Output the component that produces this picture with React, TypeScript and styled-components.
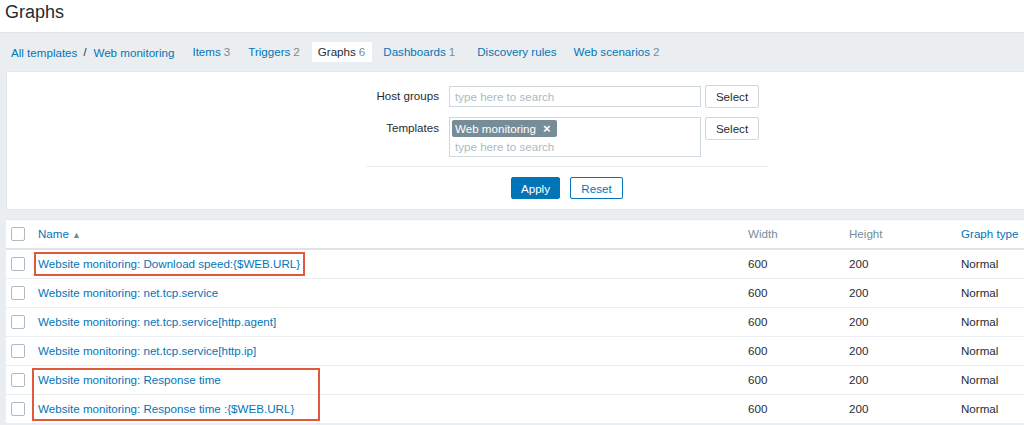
import styled, { createGlobalStyle } from "styled-components";

const GlobalStyle = createGlobalStyle`
  html, body {
    margin: 0;
    padding: 0;
    background: #ebeef0;
    font-family: "Liberation Sans", Arial, sans-serif;
    font-size: 11.6px;
    color: #1f2c33;
    overflow: hidden;
  }
`;

const Page = styled.div`
  width: 1024px;
  height: 425px;
  overflow: hidden;
`;

const Header = styled.div`
  height: 32px;
  background: #ffffff;
  border-bottom: 1px solid #dfe4e7;
  padding-left: 5px;
`;

const Title = styled.h1`
  margin: 0;
  font-size: 18px;
  font-weight: normal;
  line-height: 25px;
  color: #1f2c33;
`;

const Nav = styled.div`
  height: 37px;
  display: flex;
  align-items: center;
  padding-left: 11px;
  padding-top: 1px;
  box-sizing: border-box;
  background: #ebeef0;
  white-space: nowrap;
`;

const Crumb = styled.a`
  color: #0275b8;
  text-decoration: none;
`;

const Slash = styled.span`
  margin: 0 7px 0 6px;
  color: #1f2c33;
  font-size: 11px;
`;

const Tab = styled.a<{ $active?: boolean; $gap?: number }>`
  color: ${(p) => (p.$active ? "#1f2c33" : "#0275b8")};
  background: ${(p) => (p.$active ? "#ffffff" : "transparent")};
  text-decoration: none;
  line-height: 20px;
  padding: 0 ${(p) => (p.$active ? 7 : 6)}px 0 6px;
  margin-left: ${(p) => p.$gap ?? 6}px;
`;

const Count = styled.span`
  color: #768d99;
  margin-left: 3px;
`;

const Body = styled.div`
  padding-left: 6px;
  margin-top: 1px;
`;

const FilterPanel = styled.div`
  background: #ffffff;
  border: 1px solid #e3e8eb;
  border-right: none;
  height: 139px;
  box-sizing: border-box;
  padding-top: 13px;
  width: 1030px;
`;

const FilterForm = styled.div`
  margin-left: 359px;
  width: 402px;
`;

const FormRow = styled.div`
  display: flex;
  align-items: flex-start;
  margin-bottom: 9px;
`;

const Label = styled.div`
  width: 73px;
  text-align: right;
  padding-right: 10px;
  line-height: 22px;
`;

const TextInput = styled.div`
  width: 252px;
  height: 21px;
  box-sizing: border-box;
  border: 1px solid #cfd8dc;
  margin-top: 1px;
  padding: 0 5px;
  line-height: 19px;
  color: #acbbc2;
`;

const MultiBox = styled.div`
  width: 252px;
  height: 40px;
  box-sizing: border-box;
  border: 1px solid #cfd8dc;
  padding: 2px 2px;
`;

const Tag = styled.span`
  display: inline-flex;
  align-items: center;
  height: 17px;
  background: #768d99;
  color: #ffffff;
  border-radius: 2px;
  padding: 0 6px 0 3px;
`;

const TagClose = styled.span`
  margin-left: 7px;
  font-weight: bold;
  font-size: 13px;
  line-height: 13px;
`;

const Placeholder = styled.div`
  color: #acbbc2;
  padding-left: 3px;
  line-height: 20px;
`;

const SelectButton = styled.button`
  width: 54px;
  height: 23px;
  margin-left: 4px;
  background: #ffffff;
  border: 1px solid #cfd8dc;
  border-radius: 2px;
  font-family: inherit;
  font-size: 11.6px;
  color: #1f2c33;
  padding: 0;
`;

const Separator = styled.div`
  border-top: 1px solid #ebeef0;
  margin-top: 1px;
`;

const Buttons = styled.div`
  display: flex;
  justify-content: center;
  gap: 10px;
  margin-top: 10px;
`;

const Button = styled.button<{ $primary?: boolean }>`
  height: 22px;
  width: ${(p) => (p.$primary ? 49 : 53)}px;
  border: 1px solid #0275b8;
  border-radius: 2px;
  background: ${(p) => (p.$primary ? "#0275b8" : "#ffffff")};
  color: ${(p) => (p.$primary ? "#ffffff" : "#0275b8")};
  font-family: inherit;
  font-size: 11.6px;
  padding: 0;
`;

const TableWrap = styled.div`
  position: relative;
  margin-top: 9px;
  background: #ffffff;
  border-top: 1px solid #e3e8eb;
  width: 1030px;
`;

const Table = styled.table`
  width: 100%;
  border-collapse: collapse;
  table-layout: fixed;
`;

const Th = styled.th<{ $link?: boolean }>`
  text-align: left;
  font-weight: normal;
  height: 27px;
  padding: 0 0 1px 6px;
  white-space: nowrap;
  color: ${(p) => (p.$link ? "#0275b8" : "#768d99")};
  border-bottom: 2px solid #dfe4e7;
`;

const Td = styled.td`
  height: 27px;
  padding: 0 0 1px 6px;
  border-bottom: 1px solid #ebeef0;
  white-space: nowrap;
`;

const Check = styled.span`
  display: block;
  width: 14px;
  height: 14px;
  box-sizing: border-box;
  border: 1px solid #acbbc2;
  border-radius: 2px;
  margin-left: -1px;
  background: #ffffff;
`;

const Link = styled.a`
  color: #0275b8;
  text-decoration: none;
`;

const SortArrow = styled.span`
  color: #768d99;
  font-size: 9px;
  margin-left: 3px;
`;

const Highlight = styled.div<{ $top: number; $left: number; $w: number; $h: number }>`
  position: absolute;
  top: ${(p) => p.$top}px;
  left: ${(p) => p.$left}px;
  width: ${(p) => p.$w}px;
  height: ${(p) => p.$h}px;
  box-sizing: border-box;
  border: 2px solid #e0593a;
  pointer-events: none;
`;

const columns = [26, 710, 101, 112, 81];

const rows = [
  "Website monitoring: Download speed:{$WEB.URL}",
  "Website monitoring: net.tcp.service",
  "Website monitoring: net.tcp.service[http.agent]",
  "Website monitoring: net.tcp.service[http.ip]",
  "Website monitoring: Response time",
  "Website monitoring: Response time :{$WEB.URL}",
];

export default function App() {
  return (
    <Page>
      <GlobalStyle />
      <Header>
        <Title>Graphs</Title>
      </Header>
      <Nav>
        <Crumb>All templates</Crumb>
        <Slash>/</Slash>
        <Crumb>Web monitoring</Crumb>
        <Tab $gap={12}>
          Items<Count>3</Count>
        </Tab>
        <Tab $gap={6}>
          Triggers<Count>2</Count>
        </Tab>
        <Tab $active $gap={6}>
          Graphs<Count>6</Count>
        </Tab>
        <Tab $gap={5}>
          Dashboards<Count>1</Count>
        </Tab>
        <Tab $gap={10}>Discovery rules</Tab>
        <Tab $gap={5}>
          Web scenarios<Count>2</Count>
        </Tab>
      </Nav>
      <Body>
        <FilterPanel>
          <FilterForm>
            <FormRow>
              <Label>Host groups</Label>
              <TextInput>type here to search</TextInput>
              <SelectButton>Select</SelectButton>
            </FormRow>
            <FormRow>
              <Label>Templates</Label>
              <MultiBox>
                <Tag>
                  Web monitoring<TagClose>×</TagClose>
                </Tag>
                <Placeholder>type here to search</Placeholder>
              </MultiBox>
              <SelectButton>Select</SelectButton>
            </FormRow>
            <Separator />
            <Buttons>
              <Button $primary>Apply</Button>
              <Button>Reset</Button>
            </Buttons>
          </FilterForm>
        </FilterPanel>
        <TableWrap>
          <Table>
            <colgroup>
              {columns.map((w, i) => (
                <col key={i} style={{ width: w }} />
              ))}
            </colgroup>
            <thead>
              <tr>
                <Th>
                  <Check />
                </Th>
                <Th $link>
                  Name<SortArrow>▲</SortArrow>
                </Th>
                <Th>Width</Th>
                <Th>Height</Th>
                <Th $link>Graph type</Th>
              </tr>
            </thead>
            <tbody>
              {rows.map((name) => (
                <tr key={name}>
                  <Td>
                    <Check />
                  </Td>
                  <Td>
                    <Link>{name}</Link>
                  </Td>
                  <Td>600</Td>
                  <Td>200</Td>
                  <Td>Normal</Td>
                </tr>
              ))}
            </tbody>
          </Table>
          <Highlight $top={32} $left={28} $w={271} $h={24} />
          <Highlight $top={148} $left={26} $w={288} $h={53} />
        </TableWrap>
      </Body>
    </Page>
  );
}
